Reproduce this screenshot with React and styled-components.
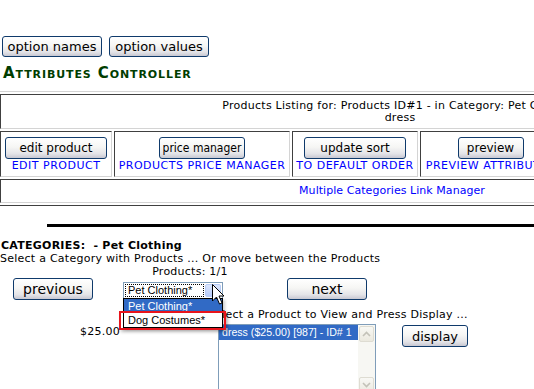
import styled, { createGlobalStyle } from "styled-components";

const GlobalStyle = createGlobalStyle`
  html, body {
    margin: 0;
    padding: 0;
    background: #fff;
    overflow: hidden;
  }
  body {
    font-family: "DejaVu Sans", Verdana, sans-serif;
    font-size: 11px;
    letter-spacing: 0.25px;
    color: #000;
  }
`;

const Page = styled.div`
  width: 534px;
  height: 389px;
  overflow: hidden;
  padding-top: 36px;
  box-sizing: border-box;
`;

const TopBar = styled.div`
  display: flex;
  gap: 7px;
  padding-left: 2px;
`;

const XpButton = styled.button`
  box-sizing: border-box;
  flex: none;
  width: ${(p) => p.$w}px;
  height: ${(p) => p.$h || 22}px;
  margin-top: ${(p) => p.$top || 0}px;
  padding: 0;
  border: 1px solid #0f3a6b;
  border-radius: 3px;
  background: linear-gradient(#ffffff 0%, #f6f6f4 45%, #e4e4e8 78%, #c8c8d2 100%);
  font-family: ${(p) =>
    p.$narrow
      ? '"DejaVu Sans Condensed", "Liberation Sans Narrow", "Liberation Sans", sans-serif'
      : '"DejaVu Sans", Verdana, sans-serif'};
  font-size: ${(p) => p.$size || 12}px;
  letter-spacing: normal;
  color: #000;
  line-height: 1;
  display: flex;
  align-items: center;
  justify-content: center;
  white-space: nowrap;
`;

const Title = styled.h1`
  margin: 7px 0 0 3px;
  font: bold 15px/18px "DejaVu Sans", Verdana, sans-serif;
  font-variant: small-caps;
  letter-spacing: 0.9px;
  color: #003d00;
`;

const OuterTable = styled.div`
  margin: 9px 0 0 -3px;
  width: 800px;
  border: 1px solid;
  border-color: #d4d4d4 #404040 #404040 #d4d4d4;
  padding: 2px;
  display: flex;
  flex-direction: column;
  gap: 2px;
`;

const InsetRow = styled.div`
  border: 1px solid;
  border-color: #404040 #d4d4d4 #d4d4d4 #404040;
  padding: 5px ${(p) => 4 + (p.$shift || 0)}px ${(p) => p.$bottom}px 4px;
  line-height: 12px;
  text-align: center;
  white-space: nowrap;
`;

const CellRow = styled.div`
  display: flex;
  gap: 2px;
`;

const Cell = styled.div`
  box-sizing: border-box;
  flex: none;
  width: ${(p) => p.$w}px;
  height: 46px;
  border: 1px solid;
  border-color: #404040 #d4d4d4 #d4d4d4 #404040;
  padding: 5px 2px 0;
  display: flex;
  flex-direction: column;
  align-items: center;
  gap: 1px;
`;

const Link = styled.a`
  color: #0000ff;
  line-height: 12px;
  white-space: nowrap;
  text-decoration: none;
  text-transform: ${(p) => (p.$caps ? "uppercase" : "none")};
  letter-spacing: ${(p) => (p.$caps ? "0.5px" : "0.05px")};
`;

const Rule = styled.div`
  margin: 18px 0 0 47px;
  width: 800px;
  height: 3px;
  background: #000;
`;

const Heading = styled.div`
  margin: 12px 0 0 1px;
  font-weight: bold;
  line-height: 13px;
  white-space: pre;
`;

const Line = styled.div`
  line-height: 13px;
  white-space: nowrap;
  width: ${(p) => (p.$w ? `${p.$w}px` : "auto")};
  text-align: ${(p) => (p.$center ? "center" : "left")};
`;

const NavRow = styled.div`
  display: flex;
  align-items: flex-start;
  height: 22px;
  padding-left: 13px;
`;

const SelectWrap = styled.div`
  position: relative;
  flex: none;
  width: 100px;
  height: 17px;
  margin: 4px 64px 0 30px;
  letter-spacing: normal;
`;

const SelectBox = styled.div`
  box-sizing: border-box;
  height: 17px;
  border: 1px solid #7f9db9;
  background: #fff;
  display: flex;
  align-items: stretch;
  padding: 1px;
  gap: 1px;
`;

const SelectText = styled.div`
  flex: 1;
  border: 1px dotted #000;
  font: 11px/11px "Liberation Sans", Arial, sans-serif;
  padding-left: 2px;
  white-space: nowrap;
`;

const SelectArrow = styled.div`
  width: 14px;
  border: 1px solid #b9cdf7;
  border-radius: 2px;
  background: linear-gradient(#dce6fd, #b7cbf9);
`;

const DropList = styled.div`
  position: absolute;
  z-index: 10;
  left: 0;
  top: 16px;
  width: 100px;
  box-sizing: border-box;
  border: 1px solid #000;
  background: #fff;
  box-shadow: 2px 2px 3px rgba(0, 0, 0, 0.2);
`;

const DropItem = styled.div`
  height: 14px;
  padding-left: 4px;
  font: 11px/14px "Liberation Sans", Arial, sans-serif;
  background: ${(p) => (p.$active ? "#316ac5" : "#fff")};
  color: ${(p) => (p.$active ? "#fff" : "#000")};
  white-space: nowrap;
`;

const Marker = styled.div`
  position: absolute;
  z-index: 11;
  left: -4px;
  top: 29px;
  width: 107px;
  height: 19px;
  box-sizing: border-box;
  border: 2px solid #e8141c;
  box-shadow: 2px 2px 3px rgba(0, 0, 0, 0.25);
`;

const Cursor = styled.svg`
  position: absolute;
  z-index: 12;
  left: 89px;
  top: 2px;
`;

const ProductRow = styled.div`
  display: flex;
  align-items: flex-start;
`;

const PriceCell = styled.div`
  flex: none;
  width: 120px;
  padding-top: 25px;
  line-height: 13px;
  text-align: right;
`;

const ProductCol = styled.div`
  margin-left: 88px;
  padding-top: 8px;
`;

const ListRow = styled.div`
  display: flex;
  align-items: flex-start;
  margin-top: 3px;
  margin-left: 10px;
`;

const ListBox = styled.div`
  box-sizing: border-box;
  flex: none;
  width: 158px;
  height: 71px;
  border: 1px solid #7f9db9;
  background: #fff;
  display: flex;
  margin-right: 26px;
`;

const ListItems = styled.div`
  flex: 1;
`;

const ListItem = styled.div`
  height: 15px;
  padding-left: 3px;
  font: 10.6px/15px "Liberation Sans", Arial, sans-serif;
  letter-spacing: normal;
  background: #316ac5;
  color: #fff;
  white-space: nowrap;
`;

const ScrollBar = styled.div`
  width: 17px;
  background: #f7f7f3;
  display: flex;
  flex-direction: column;
  justify-content: space-between;
  padding: 1px 0;
  box-sizing: border-box;
`;

const ScrollBtn = styled.div`
  width: 15px;
  height: 16px;
  margin-left: 1px;
  box-sizing: border-box;
  border: 1px solid #dedcd2;
  border-radius: 2px;
  background: linear-gradient(#f8f8f4, #ebe9df);
  display: flex;
  align-items: center;
  justify-content: center;
`;

const Chevron = ({ down }) => (
  <svg width="9" height="6" viewBox="0 0 9 6">
    <polyline
      points={down ? "1,1 4.5,4.5 8,1" : "1,5 4.5,1.5 8,5"}
      fill="none"
      stroke="#c3c2b8"
      strokeWidth="1.6"
    />
  </svg>
);

const cells = [
  { w: 112, label: "edit product", bw: 102, link: "edit product" },
  { w: 176, label: "price manager", bw: 86, link: "products price manager", narrow: true },
  { w: 126, label: "update sort", bw: 102, link: "to default order" },
  { w: 141, label: "preview", bw: 66, link: "preview attributes" },
  { w: 150, label: "copy to product", bw: 110, link: "copy attributes" },
];

export default function App() {
  return (
    <Page>
      <GlobalStyle />
      <TopBar>
        <XpButton $w={100} $h={21} $size={13}>option names</XpButton>
        <XpButton $w={100} $h={21} $size={13}>option values</XpButton>
      </TopBar>
      <Title>Attributes Controller</Title>

      <OuterTable>
        <InsetRow $bottom={4}>
          Products Listing for: Products ID#1 - in Category: Pet Clothing
          <br />
          dress
        </InsetRow>
        <CellRow>
          {cells.map((c) => (
            <Cell key={c.label} $w={c.w}>
              <XpButton $w={c.bw} $narrow={c.narrow}>{c.label}</XpButton>
              <Link $caps href="#">{c.link}</Link>
            </Cell>
          ))}
        </CellRow>
        <InsetRow $bottom={5} $shift={16}>
          <Link href="#">Multiple Categories Link Manager</Link>
        </InsetRow>
      </OuterTable>

      <Rule />
      <Heading>CATEGORIES:  - Pet Clothing</Heading>
      <Line>Select a Category with Products ... Or move between the Products</Line>
      <Line $center $w={380}>Products: 1/1</Line>

      <NavRow>
        <XpButton $w={80} $size={14}>previous</XpButton>
        <SelectWrap>
          <SelectBox>
            <SelectText>Pet Clothing*</SelectText>
            <SelectArrow />
          </SelectBox>
          <DropList>
            <DropItem $active>Pet Clothing*</DropItem>
            <DropItem>Dog Costumes*</DropItem>
          </DropList>
          <Marker />
          <Cursor width="13" height="21" viewBox="0 0 13 21">
            <path
              d="M0.5 0.5 L0.5 17 L4.5 13 L7.5 20 L10 19 L7 12 L12 12 Z"
              fill="#fff"
              stroke="#000"
              strokeWidth="1"
              strokeLinejoin="miter"
            />
          </Cursor>
        </SelectWrap>
        <XpButton $w={80} $size={14}>next</XpButton>
      </NavRow>

      <ProductRow>
        <PriceCell>$25.00</PriceCell>
        <ProductCol>
          <Line>Select a Product to View and Press Display ...</Line>
          <ListRow>
            <ListBox>
              <ListItems>
                <ListItem>dress ($25.00) [987] - ID# 1</ListItem>
              </ListItems>
              <ScrollBar>
                <ScrollBtn><Chevron /></ScrollBtn>
                <ScrollBtn><Chevron down /></ScrollBtn>
              </ScrollBar>
            </ListBox>
            <XpButton $w={66} $top={1} $size={13}>display</XpButton>
          </ListRow>
        </ProductCol>
      </ProductRow>
    </Page>
  );
}
